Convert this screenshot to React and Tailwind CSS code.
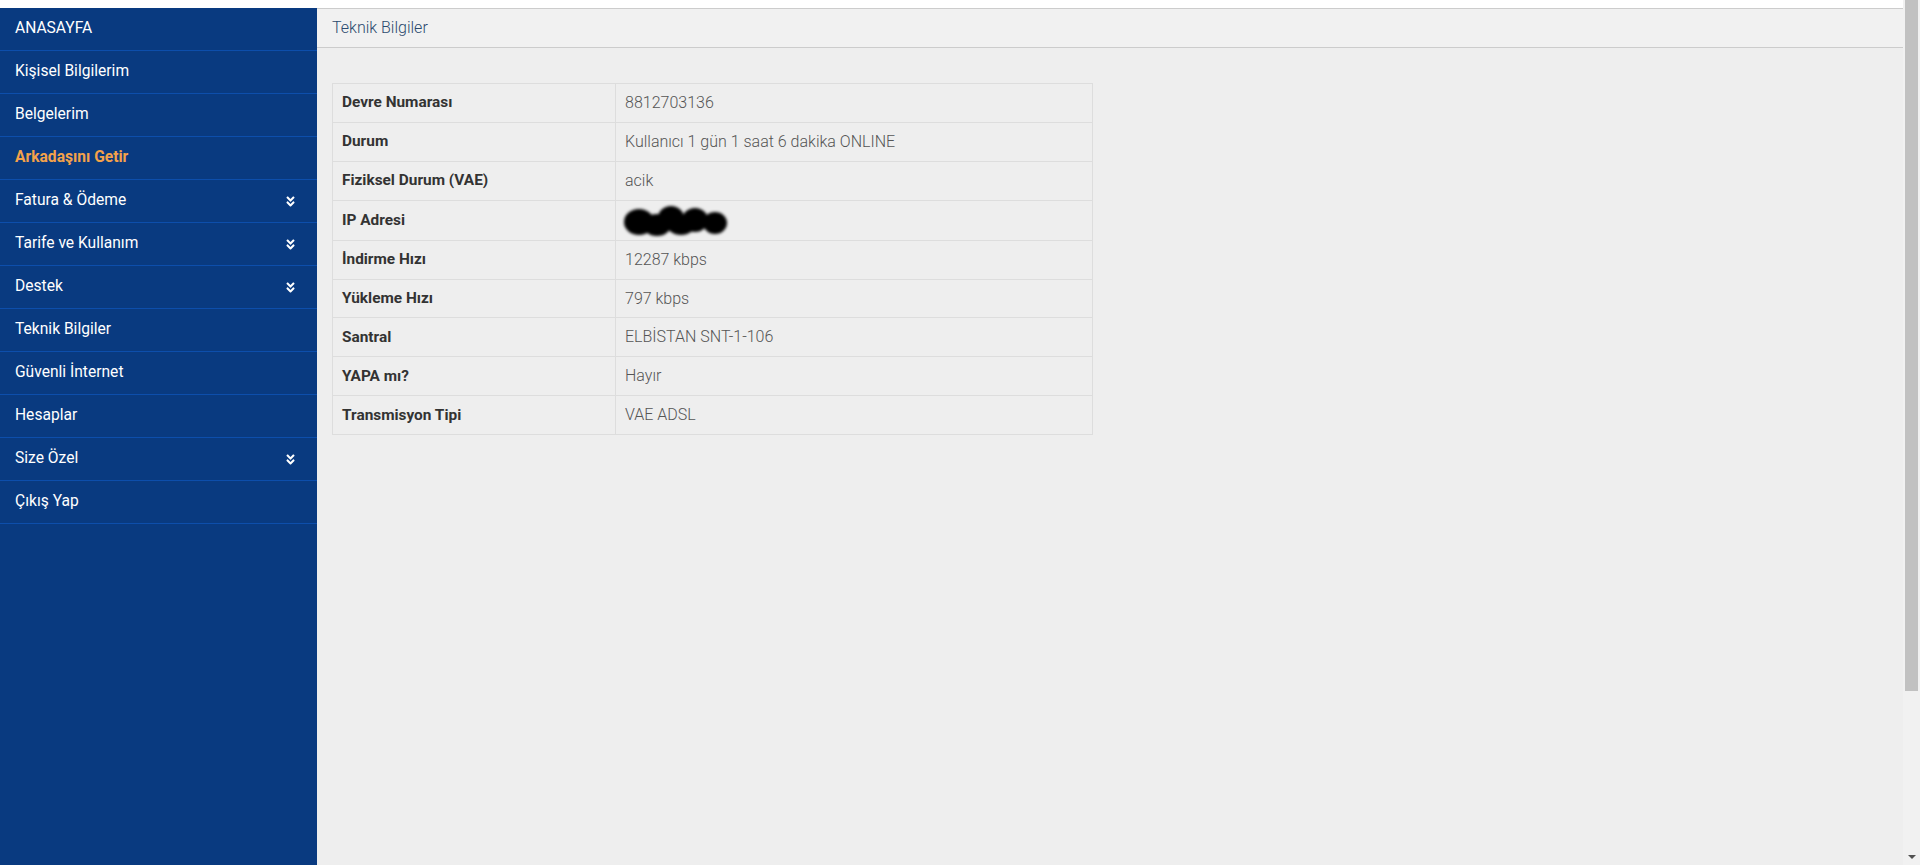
import React from 'react';
import { FaAngleDoubleDown } from 'react-icons/fa';

const menu = [
    { label: 'ANASAYFA' },
    { label: 'Kişisel Bilgilerim' },
    { label: 'Belgelerim' },
    { label: 'Arkadaşını Getir', highlight: true },
    { label: 'Fatura & Ödeme', sub: true },
    { label: 'Tarife ve Kullanım', sub: true },
    { label: 'Destek', sub: true },
    { label: 'Teknik Bilgiler' },
    { label: 'Güvenli İnternet' },
    { label: 'Hesaplar' },
    { label: 'Size Özel', sub: true },
    { label: 'Çıkış Yap' },
];

const rows = [
    ['Devre Numarası', '8812703136'],
    ['Durum', 'Kullanıcı 1 gün 1 saat 6 dakika ONLINE'],
    ['Fiziksel Durum (VAE)', 'acik'],
    ['IP Adresi', null],
    ['İndirme Hızı', '12287 kbps'],
    ['Yükleme Hızı', '797 kbps'],
    ['Santral', 'ELBİSTAN SNT-1-106'],
    ['YAPA mı?', 'Hayır'],
    ['Transmisyon Tipi', 'VAE ADSL'],
];

// karalanmış IP adresi
const Scribble = () => (
    <svg width="112" height="39" viewBox="0 0 112 39" className="-ml-[6px]">
        <defs>
            <filter id="blur" x="-20%" y="-30%" width="140%" height="160%">
                <feGaussianBlur stdDeviation="1.8" />
            </filter>
        </defs>
        <g filter="url(#blur)" fill="#000">
            <ellipse cx="20" cy="21" rx="15" ry="13" />
            <ellipse cx="38" cy="24" rx="14" ry="11" />
            <ellipse cx="52" cy="17" rx="13" ry="12" />
            <ellipse cx="62" cy="24" rx="14" ry="10" />
            <ellipse cx="76" cy="19" rx="13" ry="12" />
            <ellipse cx="96" cy="22" rx="12" ry="11" />
        </g>
    </svg>
);

export default function App() {
    return (
        <div className="flex w-[1920px] h-[865px] overflow-hidden bg-[#eeeeee] font-['Roboto',sans-serif]">
            <div className="flex-1 flex flex-col min-w-0">
                <div className="h-[8px] bg-white shrink-0"></div>
                <div className="flex flex-1 min-h-0">
                    {/* sol menü */}
                    <div className="w-[317px] shrink-0 bg-[#093a80]">
                        {menu.map(m => (
                            <div key={m.label} className="h-[43px] border-b border-[#0d4eab] flex items-center justify-between pl-[15px] pr-[20px]">
                                <span className={`text-[15.6px] ${m.highlight ? 'text-[#f4a24a] font-bold' : 'text-white font-normal'}`}>{m.label}</span>
                                {m.sub && <FaAngleDoubleDown className="text-white text-[13px]" />}
                            </div>
                        ))}
                    </div>

                    {/* içerik */}
                    <div className="flex-1 min-w-0">
                        <div className="h-[40px] bg-[#f1f1f1] border-t border-b border-[#cccccc] flex items-center pl-[15px]">
                            <span className="text-[16px] font-light text-[#2b4a6e]">Teknik Bilgiler</span>
                        </div>
                        <div className="pl-[15px] pt-[35px]">
                            <table className="w-[761px] border-collapse border border-[#dddddd]">
                                <tbody>
                                    {rows.map(([k, v]) => (
                                        <tr key={k} className="h-[38.9px]">
                                            <td className="w-[283px] border border-[#dddddd] px-[9px] py-0 text-[15.4px] font-bold text-[#333333]">{k}</td>
                                            <td className="border border-[#dddddd] px-[9px] py-0 text-[16px] font-light text-[#555555]">
                                                {v === null ? <Scribble /> : v}
                                            </td>
                                        </tr>
                                    ))}
                                </tbody>
                            </table>
                        </div>
                    </div>
                </div>
            </div>

            {/* kaydırma çubuğu */}
            <div className="w-[17px] shrink-0 bg-[#f1f1f1] flex flex-col">
                <div className="h-[691px] mx-[2px] bg-[#c1c1c1]"></div>
                <div className="flex-1"></div>
                <div className="h-[17px] flex items-center justify-center">
                    <div className="w-0 h-0 border-l-[4px] border-r-[4px] border-t-[4px] border-l-transparent border-r-transparent border-t-[#505050]"></div>
                </div>
            </div>
        </div>
    );
}
